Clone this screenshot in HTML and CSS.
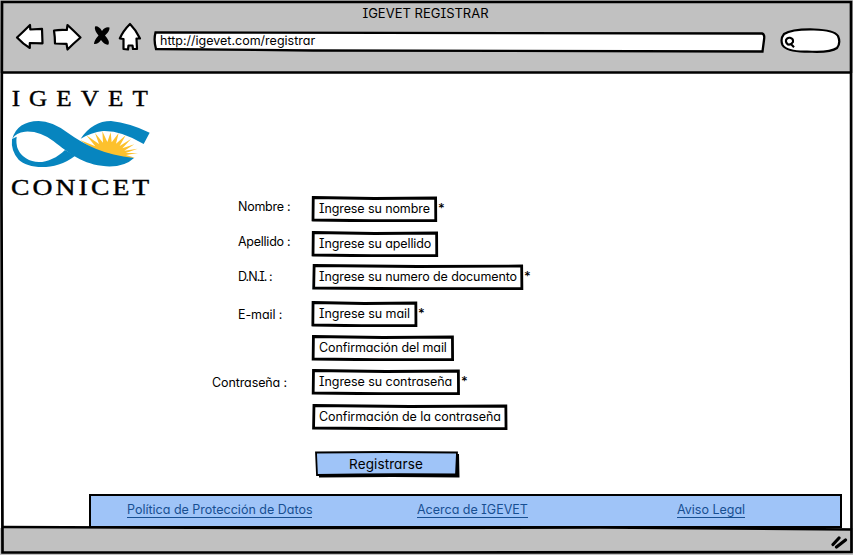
FILE: index.html
```html
<!DOCTYPE html>
<html lang="es">
<head>
<meta charset="utf-8">
<title>IGEVET REGISTRAR</title>
<link rel="stylesheet" href="styles.css">
</head>
<body>
<div class="window">
  <header class="chrome">
    <h1 class="title">IGEVET REGISTRAR</h1>
    <div class="toolbar">
      <svg class="nav" viewBox="0 20 150 34" width="150" height="34">
        <g fill="#fff" stroke="#000" stroke-width="2.200" stroke-linejoin="round">
          <path d="M17 37.500Q23 32 30 25L30.300 29.500L42 28.800L42.500 43.300L29.800 43L29.800 48Q23 44 17 37.500Z"/>
          <path d="M54 30.500Q60 29.500 66.800 30L67.500 25Q74 31 80.500 37.500Q74 43 67.500 49.500L66.500 43.800L55 43.500Q55 37 54 30.500Z"/>
          <path d="M130 24Q136 30 140 38.500L136.500 38.500L137 49L133 49L132.500 45.500L128.500 45.500L128 49.500L123.500 49L123.500 39L119.800 38.500Q123 31 130 24Z"/>
        </g>
        <path d="M95 26.500Q98.500 25.500 102 31Q105 26.500 109.500 27.500Q110 31 105 35.500Q110 41 108.500 44.500Q105 45.500 101 40Q98 44.500 94 44Q94 40.500 98.500 35.500Q94 30 95 26.500Z"/>
      </svg>
      <div class="address">
        <svg class="ink" viewBox="0 0 613 22" preserveAspectRatio="none"><path d="M2.500 1.500Q250 .8 609 2.500Q612 3 611 9L609.500 20.500Q300 19 160 19.500L3 18Q.5 9 2.500 1.500Z" fill="#fff" stroke="#000" stroke-width="2.300"/></svg>
        <span class="text url">http://igevet.com/registrar</span>
      </div>
      <svg class="search" viewBox="780 28 61 26" width="61" height="26">
        <path d="M784 34Q792 29 814 29.500Q834 30 838 36Q841 43 837 48Q830 53 807 51.500Q787 52 782.500 45Q780 39 784 34Z" fill="#fff" stroke="#000" stroke-width="2.200"/>
        <path d="M786 40Q787 37.500 790 37.800Q793.500 38.500 793 42Q791 45.200 788 44.500Q785.500 43 786 40ZM790.500 43.500L794 47.300" fill="none" stroke="#000" stroke-width="2.100"/>
      </svg>
    </div>
  </header>
  <main class="page">
    <svg class="logo" viewBox="0 0 480 360" width="160" height="120" role="img" aria-label="IGEVET CONICET">
      <text class="serif top" x="35" y="77" textLength="436" lengthAdjust="spacingAndGlyphs">IGEVET</text>
      <path fill="#fdc12d" d="M240 180L286 199L259 166L297 192L285 159L309 188L307 154L322 186L332 157L335 187L356 159L348 191L377 166L359 198L393 177L367 205L403 193L373 212L413 206L377 219L414 219L378 225L405 233L370 234L290 215Z"/>
      <g fill="#0785bf">
        <path d="M37 176Q52 124 116 123Q155 123 203 158C255 196 314 224 402 234Q373 262 318 259C250 255 205 218 161 184Q119 152 75 155Q48 158 37 176Z"/>
        <path d="M36 177Q32 213 56 239C84 266 164 275 226 227L195 210C160 244 113 258 78 235Q44 213 50 170Z"/>
        <path d="M242 176Q278 123 333 123Q389 129 449 158L431 192Q363 151 309 153Q273 158 242 176Z"/>
      </g>
      <text class="serif bottom" x="33" y="345" textLength="424" lengthAdjust="spacingAndGlyphs">CONICET</text>
    </svg>
    <form class="form">
      <div class="row r1"><label class="text l1">Nombre :</label><div class="field f1"><svg class="ink" viewBox="0 0 100 26" preserveAspectRatio="none"><use href="#frame"/></svg><span class="text">Ingrese su nombre</span></div><b>*</b></div>
      <div class="row r2"><label class="text l2">Apellido :</label><div class="field f2"><svg class="ink" viewBox="0 0 100 26" preserveAspectRatio="none"><use href="#frame"/></svg><span class="text">Ingrese su apellido</span></div></div>
      <div class="row r3"><label class="text l3">D.N.I. :</label><div class="field f3"><svg class="ink" viewBox="0 0 100 26" preserveAspectRatio="none"><use href="#frame"/></svg><span class="text">Ingrese su numero de documento</span></div><b>*</b></div>
      <div class="row r4"><label class="text l4">E-mail :</label><div class="field f4"><svg class="ink" viewBox="0 0 100 26" preserveAspectRatio="none"><use href="#frame"/></svg><span class="text">Ingrese su mail</span></div><b>*</b></div>
      <div class="row r5"><span></span><div class="field f5"><svg class="ink" viewBox="0 0 100 26" preserveAspectRatio="none"><use href="#frame"/></svg><span class="text">Confirmación del mail</span></div></div>
      <div class="row r6"><label class="text l6">Contraseña :</label><div class="field f6"><svg class="ink" viewBox="0 0 100 26" preserveAspectRatio="none"><use href="#frame"/></svg><span class="text">Ingrese su contraseña</span></div><b>*</b></div>
      <div class="row r7"><span></span><div class="field f7"><svg class="ink" viewBox="0 0 100 26" preserveAspectRatio="none"><use href="#frame"/></svg><span class="text">Confirmación de la contraseña</span></div></div>
      <div class="submit">
        <svg class="ink" viewBox="0 0 145 27"><path d="M4 4L144 3L144.500 26.500Q80 25.500 4 26.500Z"/><path d="M1 1.500Q70 .5 142 1.500L141 23.500Q70 22.500 2 24Z" fill="#9fc4f8" stroke="#000" stroke-width="1.800"/></svg>
        <span class="text send">Registrarse</span>
      </div>
    </form>
    <footer class="links">
      <a class="text k1">Política de Protección de Datos</a><a class="text k2">Acerca de IGEVET</a><a class="text k3">Aviso Legal</a>
    </footer>
  </main>
  <div class="status">
    <svg width="18" height="14" viewBox="830 535 18 14"><path d="M833 544.500L839 538M836.500 547L845.500 540" stroke="#000" stroke-width="3.200" stroke-linecap="round"/></svg>
  </div>
  <svg class="outline" viewBox="0 0 853 555"><path d="M2 2L851 2L851.500 552L420 552.500L2.500 552.500L1.500 200Z" fill="none" stroke="#000" stroke-width="2.700"/><path d="M3 72.500L851 72.500M3 527L270 528L600 527.500L851 529.500" stroke="#000" stroke-width="2.500" fill="none"/></svg>
</div>
<svg width="0" height="0" class="defs"><defs><path id="frame" d="M1 1.500L50 2.500L98.900 2L99 24.500Q45 25 .8 24Z" fill="#fff" stroke="#000" stroke-width="2.800" vector-effect="non-scaling-stroke"/></defs></svg>
</body>
</html>
```
FILE: styles.css
```css
* { box-sizing: border-box; }
body { margin: 0; background: #fff; overflow: hidden; color: #000; font-family: Inter, "Liberation Sans", sans-serif; font-size: 12.5px; letter-spacing: -.1px; font-feature-settings: "cv11", "cv08"; }
.window { width: 853px; height: 555px; position: relative; display: flex; flex-direction: column; background: #fff; }
.outline { position: absolute; inset: 0; width: 853px; height: 555px; pointer-events: none; }
.defs { position: absolute; }
.ink { position: absolute; inset: 0; width: 100%; height: 100%; overflow: visible; }
.text { position: relative; white-space: nowrap; line-height: 16px; }
.chrome { height: 73px; background: #c1c1c1; flex: none; }
.title { margin: 0; height: 20px; padding: 5px 2px 0 0; text-align: center; font-size: 13px; letter-spacing: 0; line-height: 16px; font-weight: 400; }
.toolbar { display: flex; height: 34px; align-items: flex-start; }
.nav { flex: none; }
.address { position: relative; margin: 11px 0 0 3px; width: 613px; height: 22px; padding: 2px 7px; }
.address .text { display: block; letter-spacing: 0; }
.search { margin: 8px 0 0 14px; }
.page { height: 455px; display: flex; flex-direction: column; flex: none; }
.logo { margin: 7px 0 0; flex: none; }
.serif { font-family: "Liberation Serif", serif; font-size: 72px; stroke: #000; stroke-width: 1.2px; }
.top { letter-spacing: 26px; }
.bottom { letter-spacing: 8px; }
.form { margin-top: -4px; padding-left: 212px; }
.row { display: grid; grid-template-columns: 100px max-content 12px; height: 26px; }
.row label { margin: 3px 0 0 26px; }
.row .l1, .row .l2 { letter-spacing: -.25px; }
.row .l6 { margin: 6px 0 0; }
.row .l3 { margin-top: 5px; letter-spacing: -.95px; }
.row .l4 { margin-top: 6px; }
.row b { margin: 4px 0 0 1px; font-size: 13px; line-height: 16px; font-weight: 500; }
.row .f3 + b { margin-left: 0; }
.field { position: relative; height: 26px; padding: 5px 7px 0; }
.field .text { display: block; }
.r2 { margin-top: 9px; } .r3 { margin-top: 7px; } .r4 { margin-top: 11px; }
.r5, .r6 { margin-top: 8px; } .r7 { margin-top: 9px; }
.f1 { width: 125px; } .f2 { width: 126px; } .f3 { width: 212px; } .f4 { width: 105px; }
.f5 { width: 142px; } .f6 { width: 148px; } .f7 { width: 196px; }
.f4 .text, .f6 .text, .f7 .text { letter-spacing: -.06px; }
.submit { position: relative; width: 145px; height: 27px; margin: 21px 0 0 103px; padding: 5px 3px 0 0; text-align: center; }
.submit .text { display: block; font-size: 13.5px; letter-spacing: .1px; }
.links { margin: auto 0 0 89px; width: 753px; height: 34px; background: #9fc4f8; border: 2px solid #000; border-right-width: 2.5px; padding: 6px 0 0 36px; display: grid; grid-template-columns: 290px 260px 1fr; }
.links a { color: #174f92; border-bottom: 1px solid #174f92; height: 16px; justify-self: start; letter-spacing: 0; }
.status { height: 27px; background: #c1c1c1; display: flex; justify-content: flex-end; padding: 7px 5px 0 0; }
```
